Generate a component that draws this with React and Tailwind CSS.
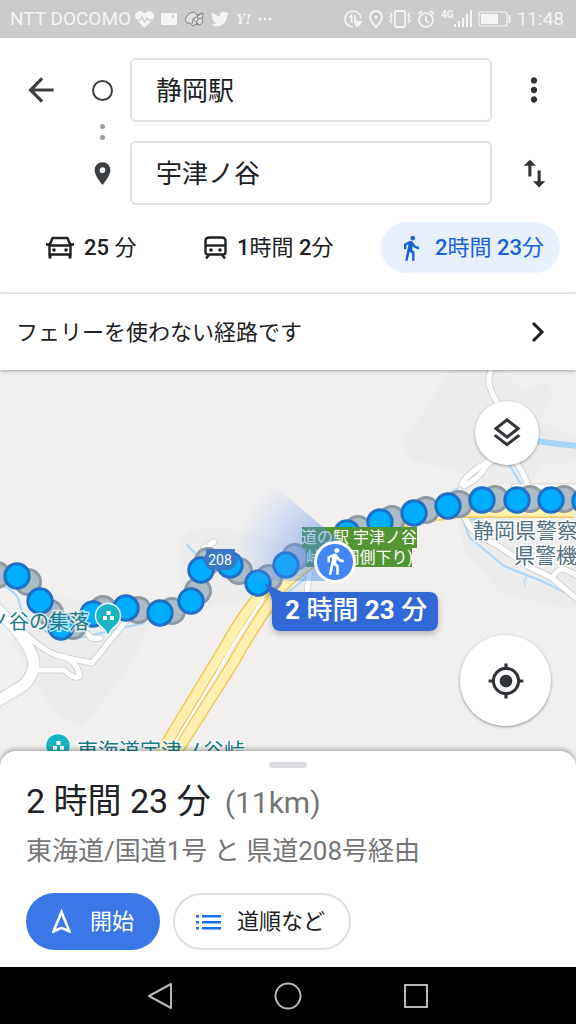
import { useState } from "react";
import {
  MdArrowBack,
  MdDirectionsWalk,
  MdLocationOn,
  MdMoreVert,
  MdMyLocation,
  MdOutlineLayers,
  MdOutlineNavigation,
  MdSwapVert,
} from "react-icons/md";
import { FaHeartbeat, FaTwitter } from "react-icons/fa";

const CarIcon = () => (
  <svg width="28" height="24" viewBox="0 0 28 24" fill="none" stroke="currentColor" strokeWidth="2.4">
    <path d="M3.5 9.5 6.5 2h15l3 7.5v9h-21z" strokeLinejoin="round" />
    <path d="M3.5 9.5h21M0 8.5h4M24 8.5h4" />
    <path d="M4 18v4.5M24 18v4.5" strokeWidth="3" />
    <circle cx="8" cy="14" r="1.8" fill="currentColor" stroke="none" />
    <circle cx="20" cy="14" r="1.8" fill="currentColor" stroke="none" />
  </svg>
);

const TrainIcon = () => (
  <svg width="23" height="24" viewBox="0 0 23 24" fill="none" stroke="currentColor" strokeWidth="2.4">
    <path d="M1.5 5q0-3.5 4-3.5h12q4 0 4 3.5v11q0 2.500-2.500 2.500h-15q-2.500 0-2.500-2.500z" />
    <path d="M1.5 9.5h20" />
    <path d="m5 19-3 3.500M18 19l3 3.500" />
    <circle cx="7" cy="14" r="1.800" fill="currentColor" stroke="none" />
    <circle cx="16" cy="14" r="1.800" fill="currentColor" stroke="none" />
  </svg>
);

const StepsIcon = () => (
  <svg width="25" height="16" viewBox="0 0 25 16" fill="#1a6df0">
    <path d="M0 1h3v2.500H0zM0 7h3v2.500H0zM0 13h3v2.500H0zM6 1h19v2.500H6zM6 7h19v2.500H6zM6 13h19v2.500H6z" />
  </svg>
);

const StatusBar = () => (
  <div className="flex h-[38px] items-center bg-[#cbcbcb] pl-[10px] pr-3 font-[Roboto] text-[19px] text-[#f4f4f4]">
    <span>NTT DOCOMO</span>
    <div className="ml-1 flex items-center gap-[7px]">
      <FaHeartbeat size={19} />
      <svg width="16" height="12" viewBox="0 0 16 12">
        <rect width="16" height="12" rx="1" fill="#f4f4f4" />
        <path d="M11 2h2v3h-2z" fill="#cbcbcb" />
      </svg>
      <svg width="20" height="18" viewBox="0 0 20 18" fill="#dedede" stroke="#7d7d7d" strokeWidth="0.9">
        <path d="M1 10 3 6 6 3l4-1 3 3 6-2-1 7 1 2-3 3-4-1-3 2-3-3H3z" />
        <path d="m8 14 1-5 5-3 4-3M13 5l1 4 4-1M9 9l5 5M14 9l-2 6" fill="none" />
      </svg>
      <FaTwitter size={18} />
      <span className="font-['Liberation_Serif'] text-[15px] font-bold italic">Y!</span>
      <svg width="14" height="4" viewBox="0 0 14 4" fill="#f4f4f4">
        <circle cx="2" cy="2" r="1.500" />
        <circle cx="7" cy="2" r="1.500" />
        <circle cx="12" cy="2" r="1.500" />
      </svg>
    </div>
    <div className="ml-auto flex items-center gap-[6px]">
      <svg width="19" height="18" viewBox="0 0 19 18" fill="none" stroke="#f4f4f4" strokeWidth="1.700">
        <path d="M17 8.500A8 8 0 1 0 9 17M5.500 7.500 7.500 5v8M11 5v8l2.500-2.500" />
        <path d="M11 17q0-6 7-6.500 0 6.500-7 6.500z" fill="#f4f4f4" stroke="none" />
      </svg>
      <svg width="14" height="18" viewBox="0 0 14 18" fill="none" stroke="#f4f4f4" strokeWidth="1.900">
        <path d="M7 17Q1 11 1 7a6 6 0 0 1 12 0q0 4-6 10z" />
        <circle cx="7" cy="7" r="1.500" fill="#f4f4f4" stroke="none" />
      </svg>
      <svg width="22" height="18" viewBox="0 0 22 18" fill="none" stroke="#f4f4f4" strokeWidth="1.800">
        <rect x="6" y="1" width="10" height="16" rx="1.500" />
        <path d="m1 3 2 2-2 2 2 2-2 2 2 2M21 3l-2 2 2 2-2 2 2 2-2 2" strokeWidth="1.500" />
      </svg>
      <svg width="18" height="18" viewBox="0 0 18 18" fill="none" stroke="#f4f4f4" strokeWidth="1.700">
        <circle cx="9" cy="10" r="7" />
        <path d="M9 6v4.500l2.500 2.500M1 4l4-3M17 4l-4-3" />
      </svg>
      <div className="flex items-end">
        <span className="self-start text-[10px] leading-[10px] font-bold">4G</span>
        <svg width="18" height="18" viewBox="0 0 18 18" fill="#f4f4f4">
          <path d="M0 14h2v3H0zM4 11h2v6H4zM8 8h2v9H8zM12 4h2v13h-2zM16 0h2v17h-2z" />
        </svg>
      </div>
      <svg width="33" height="17" viewBox="0 0 33 17">
        <rect x="1" y="1" width="28" height="14" rx="2" fill="none" stroke="#f4f4f4" strokeWidth="1.200" />
        <path d="M3 3h17v10H3zM30.500 4h2v8h-2z" fill="#f4f4f4" />
      </svg>
      <span>11:48</span>
    </div>
  </div>
);

// digits are heavier than the units next to them
const Duration = ({ text }) => (
  <span className="whitespace-pre">
    {text.split(/(\d+)/).map((part, i) =>
      /\d/.test(part) ? (
        <span key={i} className="font-medium">
          {part}
        </span>
      ) : (
        part
      )
    )}
  </span>
);

const modes = [
  { id: "car", label: "25 分", icon: <CarIcon /> },
  { id: "train", label: "1時間 2分", icon: <TrainIcon /> },
  { id: "walk", label: "2時間 23分", icon: <MdDirectionsWalk size={28} /> },
];

const SearchHeader = () => {
  const [from, setFrom] = useState("静岡駅");
  const [to, setTo] = useState("宇津ノ谷");
  const [mode, setMode] = useState("walk");

  const fieldClass =
    "h-16 w-full min-w-0 rounded-md border-2 border-[#dfe1e6] bg-white px-6 pb-1 text-[26px] text-[#202124] outline-none";

  return (
    <header className="border-b-2 border-[#eeeeee] bg-white pt-5 pb-[19px]">
      <div className="flex">
        <div className="flex w-[82px] shrink-0 flex-col">
          <button aria-label="戻る" className="flex h-16 items-center justify-center text-[#3c4043]">
            <MdArrowBack size={38} />
          </button>
        </div>
        <div className="mr-2 flex w-10 shrink-0 flex-col items-center">
          <div className="flex h-16 items-center">
            <div className="size-[21px] rounded-full border-2 border-[#3c4043]" />
          </div>
          <div className="flex h-[19px] flex-col items-center justify-center gap-[6px]">
            <div className="size-[5px] rounded-full bg-[#9aa0a6]" />
            <div className="size-[5px] rounded-full bg-[#9aa0a6]" />
          </div>
          <div className="flex h-16 items-center text-[#3c4043]">
            <MdLocationOn size={27} />
          </div>
        </div>
        <div className="flex min-w-0 flex-1 flex-col gap-[19px]">
          <input aria-label="出発地" className={fieldClass} value={from} onChange={(e) => setFrom(e.target.value)} />
          <input aria-label="目的地" className={fieldClass} value={to} onChange={(e) => setTo(e.target.value)} />
        </div>
        <div className="flex w-[84px] shrink-0 flex-col gap-[19px] text-[#303438]">
          <button aria-label="その他" className="flex h-16 items-center justify-center">
            <MdMoreVert size={38} />
          </button>
          <button
            aria-label="入れ替え"
            className="flex h-16 items-center justify-center"
            onClick={() => {
              setFrom(to);
              setTo(from);
            }}
          >
            <MdSwapVert size={37} />
          </button>
        </div>
      </div>

      <div className="mt-[17px] flex justify-between pr-4 pl-[26px]">
        {modes.map((m) => (
          <button
            key={m.id}
            onClick={() => setMode(m.id)}
            className={`flex h-[51px] items-center gap-[10px] rounded-full text-[22px] ${
              mode === m.id ? "bg-[#e8f0fe] text-[#1a62d8]" : "text-[#202124]"
            } ${m.id === "walk" ? "px-4" : "px-5"}`}
          >
            {m.icon}
            <Duration text={m.label} />
          </button>
        ))}
      </div>
    </header>
  );
};

// trail behind the blue dots
const greyDots = [
  [-3, 575], [28, 582], [50, 613], [73, 626], [103, 609], [138, 610], [172, 611], [198, 591],
  [208, 561], [239, 571], [269, 578], [295, 557], [358, 529], [392, 519], [426, 510],
  [459, 504], [495, 499], [530, 499], [564, 499],
];

const blueDots = [
  [17, 576], [40, 601], [61, 627], [93, 614], [126, 608], [160, 613], [191, 601], [201, 570],
  [230, 565], [258, 583], [286, 565], [347, 533], [380, 522], [414, 513], [448, 506],
  [482, 500], [517, 500], [551, 500], [585, 501],
];

const roads = [
  "M491 370q-3 8-2 14t10 22",
  "M462 484q2-6 16-16t28-14h20M464 486q16-8 22-20 6-8 20-6h8q8 8 14 26",
  "M514 487h62",
  "M464 514q2 12 16 22 24 12 44 28l28 14 26 22M552 578q6-10 12-9l14 7",
  "M312 565q-6 20-4 34",
  "M18 625q22 26 44 32l30 6 34-42",
  "M62 656q14 4 18 20-6 4-16-6H38",
  "M88 634q2 6 12 4M204 548l10-6",
];

const PlacePin = ({ x, y }) => (
  <g transform={`translate(${x} ${y})`}>
    <path d="M0 20Q-3 13-8 9.500a12.500 12.500 0 1 1 16 0Q3 13 0 20z" fill="#18b4c4" stroke="#e6fbfd" strokeWidth="1.500" />
    <path d="M-1.500-5h4v4h-4zM-5 0h4v4h-4zM2 0h4v4H2z" fill="#fff" />
  </g>
);

const MapCanvas = () => (
  <svg
    className="absolute inset-0 h-full w-full"
    viewBox="0 370 576 397"
    preserveAspectRatio="xMidYMid slice"
    fontFamily="Roboto, 'Noto Sans CJK JP', sans-serif"
  >
    <defs>
      <radialGradient id="beam" gradientUnits="userSpaceOnUse" cx="335" cy="562" r="102">
        <stop offset="0" stopColor="#4285f4" stopOpacity="0.6" />
        <stop offset="0.4" stopColor="#4f8bf0" stopOpacity="0.38" />
        <stop offset="1" stopColor="#7aa7f2" stopOpacity="0" />
      </radialGradient>
      <filter id="shade" x="-20%" y="-20%" width="140%" height="160%">
        <feDropShadow dx="0" dy="3" stdDeviation="3" floodOpacity="0.25" />
      </filter>
    </defs>

    <rect y="370" width="576" height="397" fill="#f1f0ef" />
    <g fill="#ececec">
      <path d="M450 370h50l25 22 22-10 6 10-12 30 35 15v25l-34 2-10 20h-55l-24-15-40-8-12-18 20-28z" />
      <path d="M180 542l8-11 30-4 80 18 10 60-62-5-46 8-20-18z" />
      <path d="M12 640 32 592l80 14 36 20q-10 40-66 98l-22-6-26-36z" />
      <path d="M450 490h126v120l-32-6-42-10-36-40z" />
    </g>

    {/* water */}
    <g fill="none" stroke="#a8d5fa" strokeLinecap="round">
      <path d="M536 441q20 3 42 5" strokeWidth="6" />
      <path d="M0 585q18 6 20 20t22 24q14 10 42 8l60-14M187 545l8 8" strokeWidth="2" />
      <path d="M430 505l28-17M466 484l12-12M510 466l12 20M462 518l8 20 34 28 40 16 32 16" strokeWidth="2" />
      <path d="M470 516h14l-10 8zM310 575l-28 22" strokeWidth="2" fill="#a8d5fa" />
      <path d="M526 577q-3 4-1 9" strokeWidth="1" />
    </g>
    <path d="M268 608l6 6v-10z" fill="#a4dc8f" stroke="#a4dc8f" strokeWidth="4" />

    {/* streets */}
    <g fill="none" strokeLinecap="round" strokeLinejoin="round">
      {roads.map((d) => (
        <path key={d} d={d} stroke="#d3d3d3" strokeWidth="7" />
      ))}
      <path d="M-6 606q38 36 40 58-2 18-18 26l-24 14" stroke="#d3d3d3" strokeWidth="13" />
      {roads.map((d) => (
        <path key={d} d={d} stroke="#fff" strokeWidth="5" />
      ))}
      <path d="M-6 606q38 36 40 58-2 18-18 26l-24 14" stroke="#fff" strokeWidth="11" />
    </g>

    {/* bypass */}
    <g fill="none">
      <path d="M152 767l74-122q18-32 34-50 24-26 60-46 60-28 140-37h114" stroke="#f3c85e" strokeWidth="12" />
      <path d="M167 767l65-102q20-36 48-76 24-26 70-48" stroke="#f3c85e" strokeWidth="12" />
      <path d="M152 767l74-122q18-32 34-50 24-26 60-46 60-28 140-37h114" stroke="#fff0b0" strokeWidth="9" />
      <path d="M167 767l65-102q20-36 48-76 24-26 70-48" stroke="#fff0b0" strokeWidth="9" />
      <path d="M168 754l46-76q20-38 50-80" stroke="#fff" strokeWidth="2" />
    </g>

    <g fill="#acbcc4" stroke="#8f99a1" strokeWidth="3">
      {greyDots.map(([x, y]) => (
        <circle key={x} cx={x} cy={y} r="12.500" />
      ))}
    </g>
    <g fill="#00aeff" stroke="#1f6fc8" strokeWidth="3">
      {blueDots.map(([x, y]) => (
        <circle key={x} cx={x} cy={y} r="12.200" />
      ))}
    </g>

    {/* route number */}
    <path d="M206 549h29q-1 5 3 10-2 8-8 11h-19q-6-3-8-11 4-5 3-10z" fill="#3a78c6" />
    <text x="220" y="565" fontSize="14" fill="#fff" textAnchor="middle">208</text>

    {/* roadside station */}
    <path d="M302 527h115v21h-5v19H306v-19h-4z" fill="#539534" />
    <g fill="#fff" fontSize="16">
      <text x="301" y="543">道の駅 宇津ノ谷</text>
      <text x="306" y="563">峠(静岡側下り)</text>
    </g>

    <path d="M335 562 336 538 264 477A112 112 0 0 0 225 581H335z" fill="url(#beam)" />
    <circle cx="335" cy="562" r="21" fill="#fff" />
    <circle cx="335" cy="562" r="18" fill="#4285f4" />
    <MdDirectionsWalk x="320" y="546" size={30} color="#fff" />

    <g fill="#177b88" stroke="#fff" strokeOpacity="0.700" strokeWidth="3" paintOrder="stroke">
      <text x="89" y="629" fontSize="20" textAnchor="end">宇津ノ谷の集落</text>
      <text x="77" y="758" fontSize="21">東海道宇津ノ谷峠</text>
    </g>
    <g fill="#50707e" fontSize="21" stroke="#fff" strokeWidth="3" paintOrder="stroke">
      <text x="473" y="538">静岡県警察</text>
      <text x="514" y="563">県警機動隊</text>
    </g>
    <PlacePin x={108} y={616} />
    <PlacePin x={58} y={746} />

    {/* duration bubble */}
    <path
      d="M264 583l18 9h147q9 0 9 9v21q0 9-9 9H281q-9 0-9-9v-21q0-5-8-18z"
      fill="#3367d6"
      filter="url(#shade)"
    />
    <text x="285" y="619" fontSize="26" fontWeight="700" fill="#fff">
      2 <tspan fontWeight="500">時間</tspan> 23 <tspan fontWeight="500">分</tspan>
    </text>
  </svg>
);

const RouteSheet = () => (
  <section className="relative -mt-4 rounded-t-2xl bg-white px-[26px] pt-[11px] pb-[17px] shadow-[0_-2px_5px_rgba(0,0,0,0.3)]">
    <div className="mx-auto h-[6px] w-[38px] rounded-full bg-[#dadce0]" />
    <h1 className="mt-[13px] flex items-baseline gap-[14px] text-[34px] leading-10 text-[#202124]">
      <span>2 時間 23 分</span>
      <span className="text-[30px] text-[#757575]">(11km)</span>
    </h1>
    <p className="mt-[12px] text-[26px] leading-8 text-[#757575]">東海道/国道1号 と 県道208号経由</p>
    <div className="mt-[26px] flex gap-[13px] text-[22px]">
      <button className="flex h-[57px] items-center gap-[13px] rounded-full bg-[#3b78e7] pr-[26px] pl-5 text-white">
        <MdOutlineNavigation size={31} />
        <span>開始</span>
      </button>
      <button className="flex h-[57px] items-center gap-4 rounded-full border-2 border-[#e0e0e0] pr-6 pl-[21px] text-[#202124]">
        <StepsIcon />
        <span>道順など</span>
      </button>
    </div>
  </section>
);

const NavBar = () => (
  <nav className="flex h-[57px] items-center justify-center bg-black text-[#b8b8b8]">
    <button aria-label="戻る" className="flex w-32 justify-center">
      <svg width="28" height="28" viewBox="0 0 28 28" fill="none" stroke="currentColor" strokeWidth="2">
        <path d="M25 2v24L3 14z" strokeLinejoin="round" />
      </svg>
    </button>
    <button aria-label="ホーム" className="flex w-32 justify-center">
      <svg width="28" height="28" viewBox="0 0 28 28" fill="none" stroke="currentColor" strokeWidth="2">
        <circle cx="14" cy="14" r="12.500" />
      </svg>
    </button>
    <button aria-label="履歴" className="flex w-32 justify-center">
      <svg width="28" height="28" viewBox="0 0 28 28" fill="none" stroke="currentColor" strokeWidth="2">
        <rect x="3" y="3" width="22" height="22" />
      </svg>
    </button>
  </nav>
);

const App = () => {
  return (
    <div className="flex min-h-screen flex-col bg-white font-[Roboto,'Noto_Sans_CJK_JP',sans-serif]">
      <StatusBar />
      <SearchHeader />
      <button className="relative z-10 flex h-[76px] items-center justify-between bg-white pr-[18px] pl-4 text-[22px] text-[#202124] shadow-[0_1px_3px_rgba(0,0,0,0.35)]">
        <span>フェリーを使わない経路です</span>
        <svg width="40" height="24" viewBox="0 0 40 24" fill="none" stroke="currentColor" strokeWidth="3">
          <path d="m15 3 9 9-9 9" />
        </svg>
      </button>
      <main className="relative min-h-72 flex-1 overflow-hidden">
        <MapCanvas />
        <button
          aria-label="レイヤ"
          className="absolute top-[31px] right-[37px] flex size-16 items-center justify-center rounded-full bg-white text-[#303438] shadow-[0_1px_3px_rgba(0,0,0,0.35)]"
        >
          <MdOutlineLayers size={36} />
        </button>
        <button
          aria-label="現在地"
          className="absolute right-[25px] bottom-[41px] flex size-[91px] items-center justify-center rounded-full bg-white text-[#303438] shadow-[0_1px_3px_rgba(0,0,0,0.4)]"
        >
          <MdMyLocation size={38} />
        </button>
      </main>
      <RouteSheet />
      <NavBar />
    </div>
  );
};

export default App;
